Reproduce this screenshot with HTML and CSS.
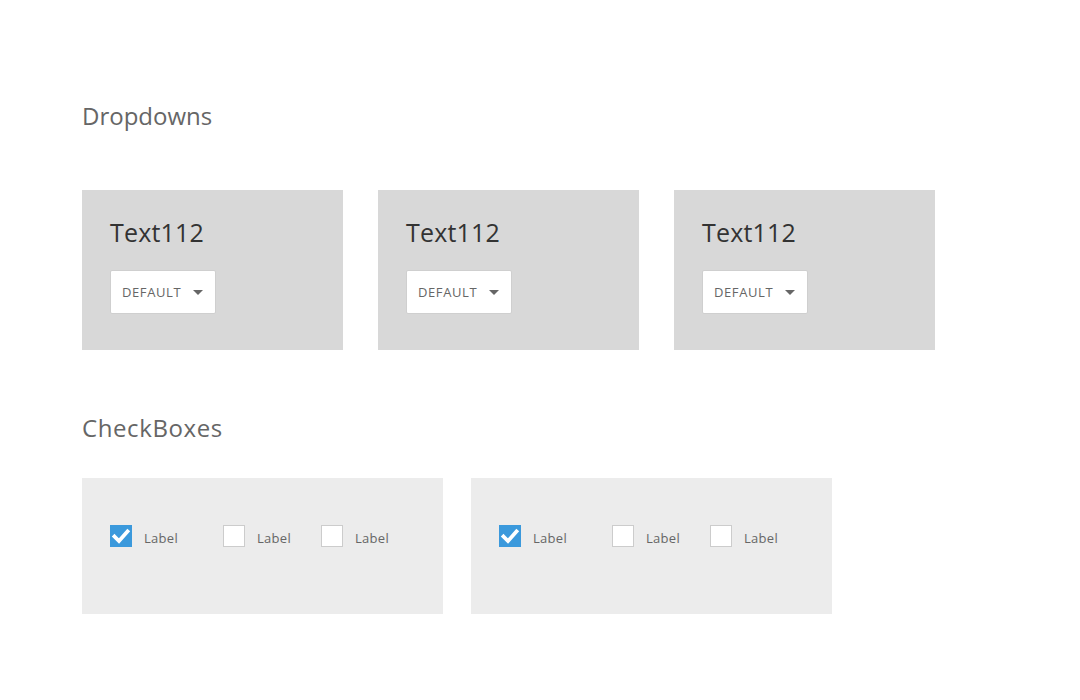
FILE: index.html
```html
<!DOCTYPE html>
<html>
<head>
<meta charset="utf-8">
<link rel="stylesheet" href="styles.css">
</head>
<body>
<div class="page">
  <h2 class="section-title title-dropdowns">Dropdowns</h2>
  <div class="dropdown-row">
    <div class="dropdown-card">
      <div class="card-title">Text112</div>
      <div class="dropdown">
        <span class="dropdown-label">DEFAULT</span>
        <span class="caret"></span>
      </div>
    </div>
    <div class="dropdown-card">
      <div class="card-title">Text112</div>
      <div class="dropdown">
        <span class="dropdown-label">DEFAULT</span>
        <span class="caret"></span>
      </div>
    </div>
    <div class="dropdown-card">
      <div class="card-title">Text112</div>
      <div class="dropdown">
        <span class="dropdown-label">DEFAULT</span>
        <span class="caret"></span>
      </div>
    </div>
  </div>

  <h2 class="section-title title-checkboxes">CheckBoxes</h2>
  <div class="check-row">
    <div class="check-card">
      <div class="check-item">
        <span class="box checked"><svg viewBox="0 0 22 22" width="22" height="22"><path d="M4.5 11.5 L9 16 L17.5 6.5" fill="none" stroke="#fff" stroke-width="3.8" stroke-linecap="square" stroke-linejoin="miter"/></svg></span>
        <span class="check-label">Label</span>
      </div>
      <div class="check-item">
        <span class="box"></span>
        <span class="check-label">Label</span>
      </div>
      <div class="check-item">
        <span class="box"></span>
        <span class="check-label">Label</span>
      </div>
    </div>
    <div class="check-card">
      <div class="check-item">
        <span class="box checked"><svg viewBox="0 0 22 22" width="22" height="22"><path d="M4.5 11.5 L9 16 L17.5 6.5" fill="none" stroke="#fff" stroke-width="3.8" stroke-linecap="square" stroke-linejoin="miter"/></svg></span>
        <span class="check-label">Label</span>
      </div>
      <div class="check-item">
        <span class="box"></span>
        <span class="check-label">Label</span>
      </div>
      <div class="check-item">
        <span class="box"></span>
        <span class="check-label">Label</span>
      </div>
    </div>
  </div>
</div>
</body>
</html>
```
FILE: styles.css
```css
html, body {
  margin: 0;
  padding: 0;
  background: #ffffff;
}
body {
  font-family: "Open Sans", "Noto Sans", sans-serif;
  color: #333;
}
.page {
  padding: 104px 82px 0 82px;
}
.section-title {
  margin: 0;
  font-size: 24px;
  line-height: 24px;
  font-weight: 400;
  color: #666666;
}
.title-checkboxes {
  margin-top: 66px;
  letter-spacing: 0.6px;
}
.dropdown-row {
  display: flex;
  gap: 35px;
  margin-top: 62px;
}
.dropdown-card {
  width: 261px;
  height: 160px;
  box-sizing: border-box;
  background: #d8d8d8;
  padding: 29px 0 0 28px;
}
.card-title {
  font-size: 25px;
  line-height: 26px;
  color: #333333;
  letter-spacing: 0.2px;
}
.dropdown {
  margin-top: 25px;
  width: 106px;
  height: 44px;
  box-sizing: border-box;
  background: #ffffff;
  border: 1px solid #cfcfcf;
  border-radius: 2px;
  display: flex;
  align-items: center;
  padding-left: 11px;
}
.dropdown-label {
  font-size: 13px;
  color: #666666;
  letter-spacing: 0.6px;
}
.caret {
  width: 0;
  height: 0;
  border-left: 5px solid transparent;
  border-right: 5px solid transparent;
  border-top: 5px solid #666666;
  margin-left: 12px;
}
.check-row {
  display: flex;
  gap: 28px;
  margin-top: 38px;
}
.check-card {
  width: 361px;
  height: 136px;
  box-sizing: border-box;
  background: #ececec;
  padding: 47px 0 0 28px;
  display: flex;
  align-items: flex-start;
}
.check-item {
  display: flex;
  align-items: center;
  width: 98px;
}
.check-item:first-child {
  width: 113px;
}
.box {
  width: 22px;
  height: 22px;
  box-sizing: border-box;
  background: #ffffff;
  border: 1px solid #cccccc;
  display: block;
}
.box.checked {
  background: #3b99dc;
  border: none;
}
.box svg {
  display: block;
}
.check-label {
  margin-left: 12px;
  padding-top: 4px;
  font-size: 13px;
  color: #666666;
  letter-spacing: 0.3px;
}
```
